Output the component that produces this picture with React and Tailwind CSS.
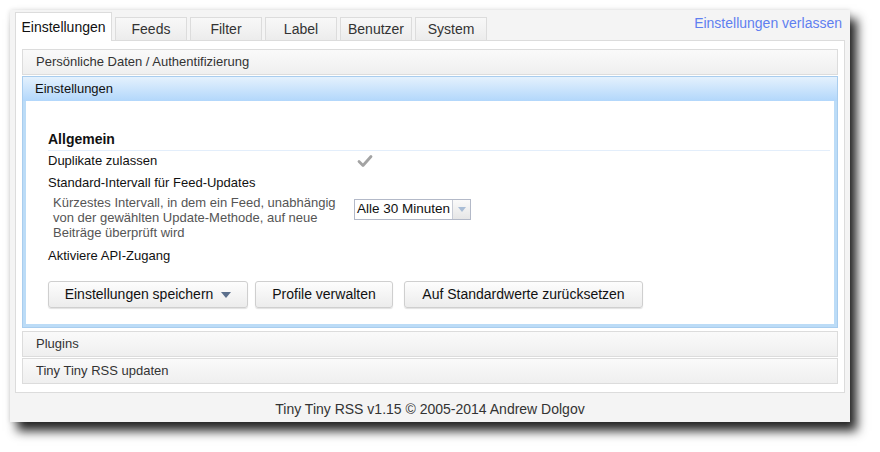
const tabs = ["Feeds", "Filter", "Label", "Benutzer", "System"];

function Header({ children }) {
  return (
    <div className="h-[26px] flex items-center px-[13px] border border-[#dcdcdc] bg-gradient-to-b from-[#fafafa] to-[#efefef] text-[13px] text-[#333]">
      {children}
    </div>
  );
}

function Button({ children, className = "" }) {
  return (
    <button
      className={
        "h-[27px] flex items-center justify-center gap-2 rounded-[3px] border border-[#cfcfcf] bg-gradient-to-b from-[#fdfdfd] to-[#ececec] text-[14px] text-[#111] shadow-[0_1px_1px_rgba(0,0,0,0.12)] " +
        className
      }
    >
      {children}
    </button>
  );
}

export default function App() {
  return (
    <div className="w-[880px] h-[452px] bg-white pt-[10px] pl-[10px] font-['Liberation_Sans',Arial,sans-serif]">
      <div className="w-[840px] h-[412px] bg-[#f4f4f4] flex flex-col shadow-[0_0_5px_rgba(0,0,0,0.12),7px_9px_10px_rgba(0,0,0,0.85)]">
        {/* Tabs */}
        <div className="flex items-end h-[30px] px-[5px] gap-[3px]">
          <div className="h-[29px] w-[97px] flex items-center justify-center bg-white border border-b-0 border-[#dcdcdc] text-[14px] text-[#111] relative top-[1px]">
            Einstellungen
          </div>
          {tabs.map((t) => (
            <div
              key={t}
              className="h-[23px] w-[72px] flex items-center justify-center border border-b-0 border-[#dcdcdc] bg-gradient-to-b from-[#f8f8f8] to-[#ececec] text-[14px] text-[#333]"
            >
              {t}
            </div>
          ))}
          <a className="ml-auto self-start mt-[3px] mr-[3px] text-[14px] text-[#5f7ff0]">Einstellungen verlassen</a>
        </div>

        {/* Panel */}
        <div className="mx-[5px] h-[353px] bg-white border border-[#dcdcdc] px-[6px] pt-[8px] flex flex-col gap-[1px]">
          <Header>Persönliche Daten / Authentifizierung</Header>
          <div className="border border-[#a9cdee]">
            <div className="h-[24px] flex items-center px-[12px] bg-gradient-to-b from-[#e4f1fd] to-[#b2d7fb] text-[13px] text-[#111]">
              Einstellungen
            </div>
            <div className="border-[3px] border-t-0 border-[#bcdcf7] pl-[22px] pr-[4px] pt-[30px] h-[226px] text-[13px] text-[#111]">
              <div className="font-bold text-[14px] leading-[16px] pb-[3px] border-b border-[#e3eefb]">Allgemein</div>
              <div className="flex items-center h-[20px]">
                <span className="w-[309px]">Duplikate zulassen</span>
                <svg width="16" height="14" viewBox="0 0 16 14">
                  <path d="M2 7.5 L6 11.5 L14 2.5" fill="none" stroke="#a3a3a3" strokeWidth="2.8" strokeLinecap="round" strokeLinejoin="round" />
                </svg>
              </div>
              <div className="h-[24px] flex items-center">Standard-Intervall für Feed-Updates</div>
              <div className="flex items-start">
                <div className="w-[306px] pl-[5px] text-[#555] leading-[15px]">
                  Kürzestes Intervall, in dem ein Feed, unabhängig von der gewählten Update-Methode, auf neue Beiträge überprüft wird
                </div>
                <div className="flex h-[21px] mt-[4px] border border-[#b3b9c8] text-[13.5px]">
                  <span className="px-[2px] flex items-center">Alle 30 Minuten</span>
                  <span className="w-[18px] border-l border-[#c8ccd6] bg-gradient-to-b from-[#fafafa] to-[#e6e6e6] flex items-center justify-center">
                    <svg width="8" height="5" viewBox="0 0 8 5"><path d="M0 0 H8 L4 5 Z" fill="#a9bdd6" /></svg>
                  </span>
                </div>
              </div>
              <div className="h-[22px] flex items-center mt-[5px]">Aktiviere API-Zugang</div>
              <div className="flex gap-[7px] mt-[14px]">
                <Button className="w-[200px]">
                  Einstellungen speichern
                  <svg width="10" height="6" viewBox="0 0 10 6"><path d="M0 0 H10 L5 6 Z" fill="#5b6f8c" /></svg>
                </Button>
                <Button className="w-[138px]">Profile verwalten</Button>
                <Button className="w-[239px] ml-[4px]">Auf Standardwerte zurücksetzen</Button>
              </div>
            </div>
          </div>
          <div className="mt-[2px]">
            <Header>Plugins</Header>
          </div>
          <Header>Tiny Tiny RSS updaten</Header>
        </div>

        {/* Footer */}
        <div className="flex-1 flex items-center justify-center pt-[4px] text-[14px] text-[#333]">
          Tiny Tiny RSS v1.15 © 2005-2014 Andrew Dolgov
        </div>
      </div>
    </div>
  );
}
